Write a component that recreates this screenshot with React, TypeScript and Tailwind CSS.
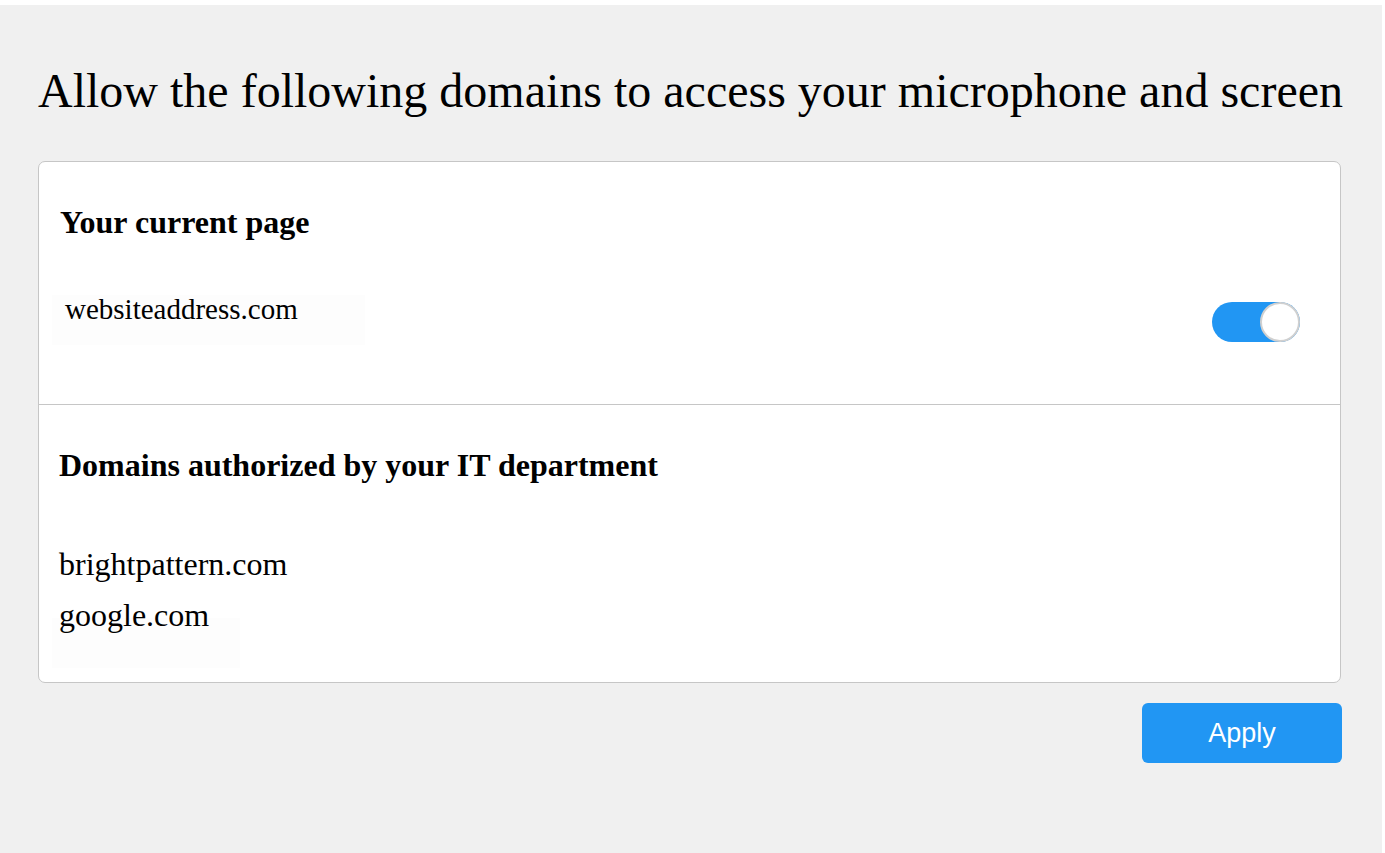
import React, { useState } from "react";

export default function App() {
  const [on, setOn] = useState(true);
  return (
    <div className="w-[1385px] h-[853px] bg-white pt-[5px] pr-[3px] overflow-hidden">
      <div
        className="h-[848px] bg-[#f0f0f0] pl-[38px] pr-[41px] text-black"
        style={{ fontFamily: '"Liberation Serif", "Times New Roman", serif' }}
      >
        <h1 className="pt-[58px] text-[48px] leading-[55px] whitespace-nowrap">
          Allow the following domains to access your microphone and screen
        </h1>
        <div className="mt-[43px] bg-white border border-[#c6c6c6] rounded-[7px]">
          <div className="h-[243px] border-b border-[#c6c6c6] flex flex-col">
            <h2 className="pl-[21px] pt-[42px] text-[32px] leading-[37px] font-bold">Your current page</h2>
            <div className="flex items-start justify-between pr-[40px] mt-[54px]">
              <div className="ml-[13px] w-[313px] h-[50px] bg-[#fdfdfd] pl-[13px] text-[29px] leading-[28px]">
                websiteaddress.com
              </div>
              <button
                onClick={() => setOn(!on)}
                className={`relative w-[88px] h-[40px] rounded-full mt-[7px] ${on ? "bg-[#2196f3]" : "bg-[#cccccc]"}`}
              >
                <span
                  className={`absolute top-0 w-[40px] h-[40px] rounded-full bg-white border-2 border-[#d0d0d0] ${on ? "right-0" : "left-0"}`}
                />
              </button>
            </div>
          </div>
          <div className="h-[277px] flex flex-col">
            <h2 className="pl-[20px] pt-[42px] text-[32px] leading-[37px] font-bold">
              Domains authorized by your IT department
            </h2>
            <div className="mt-[55px] pl-[20px] text-[32px] leading-[51px]">brightpattern.com</div>
            <div className="relative pl-[20px] text-[32px] leading-[51px]">
              <div className="absolute left-[13px] top-[28px] w-[188px] h-[50px] bg-[#fdfdfd]" />
              <span className="relative">google.com</span>
            </div>
          </div>
        </div>
        <div className="flex justify-end mt-[20px] mr-[-1px]">
          <button
            className="w-[200px] h-[60px] rounded-[6px] bg-[#2196f3] text-white text-[27px]"
            style={{ fontFamily: '"Liberation Sans", Arial, sans-serif' }}
          >
            Apply
          </button>
        </div>
      </div>
    </div>
  );
}
